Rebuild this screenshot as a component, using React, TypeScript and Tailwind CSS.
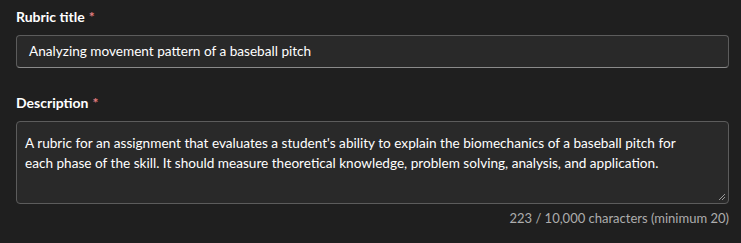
import React from "react";

export default function App() {
  const desc =
    "A rubric for an assignment that evaluates a student's ability to explain the biomechanics of a baseball pitch for each phase of the skill. It should measure theoretical knowledge, problem solving, analysis, and application.";
  return (
    <div
      className="w-[741px] h-[243px] bg-[#1f1f1f] text-[#ffffff] pl-4 pr-3 pt-[7px]"
      style={{ fontFamily: '"Segoe UI", Lato, sans-serif' }}
    >
      <div className="flex items-center gap-1 h-[20px] text-[14px] font-bold leading-[20px]">
        <span>Rubric title</span>
        <span className="text-[#e37d80]">*</span>
      </div>
      <div className="mt-[8px] h-[33px] rounded-[4px] border border-[#5c5c5c] border-b-[#8a8a8a] bg-[#292929] flex items-center px-3 text-[13.6px]">
        Analyzing movement pattern of a baseball pitch
      </div>
      <div className="mt-[25px] flex items-center gap-1 h-[20px] text-[14px] font-bold leading-[20px]">
        <span>Description</span>
        <span className="text-[#e37d80]">*</span>
      </div>
      <div className="relative mt-[8px] h-[83px] rounded-[4px] border border-[#5c5c5c] bg-[#292929] pl-2 pr-[36px] pt-[11px] text-[13.6px] leading-[20px]">
        {desc}
        <svg className="absolute right-[2px] bottom-[2px]" width="8" height="8" viewBox="0 0 8 8">
          <path d="M7 1 L1 7 M7 4 L4 7" stroke="#9a9a9a" strokeWidth="1" />
        </svg>
      </div>
      <div className="mt-[5px] text-right text-[13px] text-[#adadad] leading-[18px]">
        223 / 10,000 characters (minimum 20)
      </div>
    </div>
  );
}
